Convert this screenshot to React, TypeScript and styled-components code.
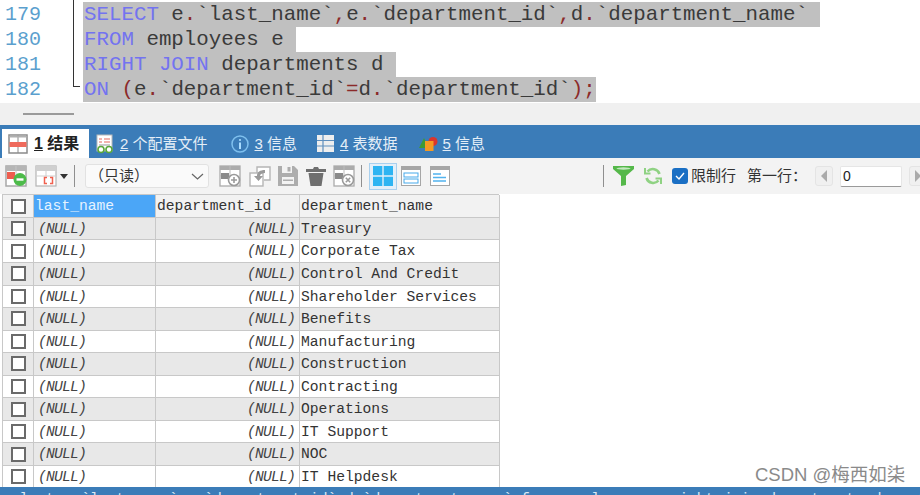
import styled, { createGlobalStyle } from "styled-components";

const GlobalStyle = createGlobalStyle`
  html, body {
    margin: 0;
    padding: 0;
    background: #fff;
  }
  * {
    box-sizing: border-box;
  }
`;

const MONO = `"Liberation Mono", "DejaVu Sans Mono", monospace`;
const CJK = `"Liberation Sans", "Noto Sans CJK SC", sans-serif`;

const departments = [
  "Treasury",
  "Corporate Tax",
  "Control And Credit",
  "Shareholder Services",
  "Benefits",
  "Manufacturing",
  "Construction",
  "Contracting",
  "Operations",
  "IT Support",
  "NOC",
  "IT Helpdesk",
];

// small toolbar / tab drawings
const ResultIcon = () => (
  <svg width="20" height="20" viewBox="0 0 20 20">
    <rect x="1" y="1" width="18" height="18" fill="#fff" stroke="#8a8a8a" strokeWidth="1.5" />
    <rect x="1.5" y="8" width="17" height="5" fill="#ef6a5c" />
    <path d="M10 1v7M10 13v6" stroke="#8a8a8a" />
    <rect x="1.5" y="1.5" width="17" height="2" fill="#b0b0b0" />
  </svg>
);

const ProfileIcon = () => (
  <svg width="18" height="20" viewBox="0 0 18 20">
    <rect x="1" y="1" width="15" height="16" fill="#fff" stroke="#b9b9b9" />
    <path d="M3 5h3M8 5h6M3 8h3M8 8h6" stroke="#e56a5f" strokeWidth="1.2" />
    <path d="M3 11h11" stroke="#aaa" strokeWidth="1.2" />
    <circle cx="5" cy="15.5" r="3" fill="#fff" stroke="#5aa83a" strokeWidth="1.6" />
    <circle cx="13" cy="15.5" r="3" fill="#fff" stroke="#5aa83a" strokeWidth="1.6" />
  </svg>
);

const InfoIcon = () => (
  <svg width="18" height="18" viewBox="0 0 18 18">
    <circle cx="9" cy="9" r="8" fill="#3b7cb8" stroke="#7fc0ee" strokeWidth="1.5" />
    <circle cx="9" cy="5" r="1.1" fill="#a9dcff" />
    <rect x="8" y="7.5" width="2" height="6.5" fill="#a9dcff" />
  </svg>
);

const TableDataIcon = () => (
  <svg width="17" height="17" viewBox="0 0 17 17">
    <rect width="17" height="17" fill="#eeeeee" />
    <path d="M6 0v17M0 5.5h17M0 11h17" stroke="#5f8fbd" strokeWidth="1.2" />
  </svg>
);

const ShapesIcon = () => (
  <svg width="19" height="18" viewBox="0 0 19 18">
    <circle cx="14" cy="6.5" r="4.5" fill="#d9362d" />
    <path d="M0 13L5 3l5 10z" fill="#3f9a35" />
    <rect x="6" y="6" width="8.5" height="10" fill="#f59a23" />
  </svg>
);

const AddGridIcon = () => (
  <svg width="22" height="22" viewBox="0 0 22 22">
    <rect x="1" y="1" width="20" height="20" fill="#fff" stroke="#a8a8a8" strokeWidth="1.5" />
    <rect x="1" y="1" width="20" height="5" fill="#b5b5b5" />
    <path d="M11 1v20M1 11h20" stroke="#c4c4c4" />
    <rect x="2" y="7" width="8" height="7" fill="#ee5d4e" />
    <circle cx="15" cy="14.5" r="6.5" fill="#4dbb4a" />
    <path d="M11.5 14.5h7" stroke="#fff" strokeWidth="2.4" />
  </svg>
);

const RedGridIcon = () => (
  <svg width="22" height="22" viewBox="0 0 22 22">
    <rect x="1" y="1" width="20" height="20" fill="#fff" stroke="#b5b5b5" strokeWidth="1.2" />
    <rect x="1" y="1" width="20" height="5" fill="#cfcfcf" />
    <path d="M11 1v10M1 11h20" stroke="#cfcfcf" />
    <path d="M12 12.5H9.5v6H12M15 12.5h2.5v6H15" fill="none" stroke="#f0614f" strokeWidth="1.5" />
  </svg>
);

const GrayGridIcon = ({ cross }: { cross?: boolean }) => (
  <svg width="22" height="22" viewBox="0 0 22 22">
    <rect x="1" y="1" width="20" height="20" fill="#fff" stroke="#ababab" strokeWidth="1.3" />
    <rect x="1" y="1" width="20" height="4" fill="#ababab" />
    <path d="M11 1v12M1 11h12" stroke="#bbb" />
    <rect x="2" y="8" width="8" height="6" fill="#8a8a8a" />
    <circle cx="15" cy="15" r="5.5" fill="#fff" stroke="#9a9a9a" strokeWidth="1.6" />
    {cross ? (
      <path d="M12.8 12.8l4.4 4.4M17.2 12.8l-4.4 4.4" stroke="#9a9a9a" strokeWidth="1.6" />
    ) : (
      <path d="M12 15h6M15 12v6" stroke="#9a9a9a" strokeWidth="1.6" />
    )}
  </svg>
);

const ImportIcon = () => (
  <svg width="22" height="22" viewBox="0 0 22 22">
    <path d="M8 8V2h13v13h-6" fill="#fff" stroke="#b5b5b5" strokeWidth="1.4" />
    <rect x="1" y="8" width="13" height="13" fill="#fff" stroke="#b5b5b5" strokeWidth="1.4" />
    <path d="M16 5c-5 0-8 2-8 6H5l4.5 5L14 11h-3c0-2 2-3 5-3z" fill="#9a9a9a" />
  </svg>
);

const SaveIcon = () => (
  <svg width="20" height="20" viewBox="0 0 20 20">
    <path d="M0 0h16l4 4v16H0z" fill="#adadad" />
    <rect x="4" y="0" width="10" height="7" fill="#f3f3f3" />
    <rect x="9.5" y="1" width="3" height="4.5" fill="#adadad" />
    <rect x="4" y="11" width="12" height="7" fill="#f3f3f3" />
    <rect x="5" y="13.5" width="10" height="1.5" fill="#adadad" />
  </svg>
);

const TrashIcon = () => (
  <svg width="20" height="20" viewBox="0 0 20 20">
    <path d="M0 3h7l1-2h4l1 2h7v3H0zM2.5 7h15L15.5 20h-11z" fill="#6f6f6f" />
  </svg>
);

const LayoutGridIcon = () => (
  <svg width="20" height="20" viewBox="0 0 20 20">
    <path d="M0 0h9.3v9.3H0zM10.7 0H20v9.3h-9.3zM0 10.7h9.3V20H0zM10.7 10.7H20V20h-9.3z" fill="#2eb4f2" />
  </svg>
);

const LayoutFormIcon = () => (
  <svg width="20" height="20" viewBox="0 0 20 20">
    <rect x="0.5" y="0.5" width="19" height="19" fill="#fff" stroke="#a6a6a6" />
    <rect width="20" height="4" fill="#a6a6a6" />
    <rect x="3" y="7" width="14" height="4" fill="#fff" stroke="#47a9ea" />
    <rect x="3" y="13" width="14" height="4" fill="#fff" stroke="#47a9ea" />
  </svg>
);

const LayoutTextIcon = () => (
  <svg width="20" height="20" viewBox="0 0 20 20">
    <rect x="0.5" y="0.5" width="19" height="19" fill="#fff" stroke="#a6a6a6" />
    <rect width="20" height="4" fill="#a6a6a6" />
    <path d="M3 8h8M3 11.5h13M3 15h13" stroke="#52b3ee" strokeWidth="1.4" />
  </svg>
);

const FunnelIcon = () => (
  <svg width="21" height="20" viewBox="0 0 21 20">
    <path d="M0 0h21v3L13 10v9l-5 1V10L0 3z" fill="#55b84a" />
    <ellipse cx="10.5" cy="2.5" rx="7" ry="1.2" fill="#c3e8be" />
  </svg>
);

const RefreshIcon = () => (
  <svg width="18" height="18" viewBox="0 0 18 18" fill="none" stroke="#8fd283" strokeWidth="2.6">
    <path d="M15.5 7A7 7 0 0 0 3.5 4.5" />
    <path d="M2.5 11a7 7 0 0 0 12 2.5" />
    <path d="M1 1v5.5h5.5M17 17v-5.5h-5.5" strokeWidth="2" />
  </svg>
);

const Tick = () => (
  <svg width="10" height="8" viewBox="0 0 10 8" fill="none" stroke="#fff" strokeWidth="1.4">
    <path d="M1 4l3 3 5-6" />
  </svg>
);

const Chevron = () => (
  <svg width="13" height="7" viewBox="0 0 13 7" fill="none" stroke="#666" strokeWidth="1.2">
    <path d="M1 1l5.5 5L12 1" />
  </svg>
);

const Key = ({ children }: { children: string }) => <KeyWord>{children}</KeyWord>;
const P = ({ children }: { children: string }) => <Punct>{children}</Punct>;

const App = () => {
  return (
    <Page>
      <GlobalStyle />
      <Editor>
        <FoldLine />
        <CodeRow>
          <LineNo>179</LineNo>
          <Selection>
            <Key>SELECT</Key> e<P>.</P>`last_name`<P>,</P>e<P>.</P>`department_id`<P>,</P>d<P>.</P>`department_name`{" "}
          </Selection>
        </CodeRow>
        <CodeRow>
          <LineNo>180</LineNo>
          <Selection>
            <Key>FROM</Key> employees e{" "}
          </Selection>
        </CodeRow>
        <CodeRow>
          <LineNo>181</LineNo>
          <Selection>
            <Key>RIGHT JOIN</Key> departments d{" "}
          </Selection>
        </CodeRow>
        <CodeRow>
          <LineNo>182</LineNo>
          <Selection>
            <Key>ON</Key> <P>(</P>e<P>.</P>`department_id`<P>=</P>d<P>.</P>`department_id`<P>);</P>
          </Selection>
        </CodeRow>
      </Editor>

      <ScrollStrip>
        <ScrollThumb />
      </ScrollStrip>

      <TabBar>
        <ActiveTab>
          <ResultIcon />
          <TabLabel $active>
            <u>1</u> 结果
          </TabLabel>
        </ActiveTab>
        <Tab $gap={6} $left={7}>
          <ProfileIcon />
          <TabLabel>
            <u>2</u> 个配置文件
          </TabLabel>
        </Tab>
        <Tab $gap={6} $left={23}>
          <InfoIcon />
          <TabLabel>
            <u>3</u> 信息
          </TabLabel>
        </Tab>
        <Tab $gap={6} $left={20}>
          <TableDataIcon />
          <TabLabel>
            <u>4</u> 表数据
          </TabLabel>
        </Tab>
        <Tab $gap={5} $left={21}>
          <ShapesIcon />
          <TabLabel>
            <u>5</u> 信息
          </TabLabel>
        </Tab>
      </TabBar>

      <Toolbar>
        <ToolGroup $gap={8}>
          <AddGridIcon />
          <RedGridIcon />
        </ToolGroup>
        <DropArrow />
        <ToolSep $left={6} />
        <ReadOnlySelect>
          <span>（只读）</span>
          <Chevron />
        </ReadOnlySelect>
        <ToolGroup $gap={7.5} $left={10}>
          <GrayGridIcon />
          <ImportIcon />
          <SaveIcon />
          <TrashIcon />
          <GrayGridIcon cross />
        </ToolGroup>
        <ToolSep $left={6} />
        <ViewButton>
          <LayoutGridIcon />
        </ViewButton>
        <ToolGroup $gap={9} $left={4}>
          <LayoutFormIcon />
          <LayoutTextIcon />
        </ToolGroup>
        <ToolSep $left={153} />
        <ToolGroup $gap={10} $left={9}>
          <FunnelIcon />
          <RefreshIcon />
        </ToolGroup>
        <LimitCheck>
          <Tick />
        </LimitCheck>
        <ToolText $left={3}>限制行</ToolText>
        <ToolText $left={11}>第一行：</ToolText>
        <PagerButton $left={8}>
          <PagerArrow />
        </PagerButton>
        <RowInput>0</RowInput>
        <PagerButton $left={7}>
          <PagerArrow $right />
        </PagerButton>
      </Toolbar>

      <Results>
        <Table>
          <CheckCell>
            <Check />
          </CheckCell>
          <HeadCell $selected>last_name</HeadCell>
          <HeadCell>department_id</HeadCell>
          <HeadCell>department_name</HeadCell>
          {departments.map((name, i) => (
            <TableRow key={name} $odd={i % 2 === 0}>
              <CheckCell>
                <Check />
              </CheckCell>
              <NullCell>(NULL)</NullCell>
              <NullCell $right>(NULL)</NullCell>
              <Cell>{name}</Cell>
            </TableRow>
          ))}
        </Table>
        <Watermark>CSDN @梅西如柒</Watermark>
      </Results>

      <StatusBar>
        select e.`last_name`,e.`department_id`,d.`department_name` from employees e right join departments d on (e.`department_id`=d.`department_id`)
      </StatusBar>
    </Page>
  );
};

// #region styled-components

const Page = styled.div`
  position: relative;
  width: 920px;
  height: 495px;
  display: flex;
  flex-direction: column;
  overflow: hidden;
  background: #fff;
`;

const Editor = styled.div`
  position: relative;
  height: 103px;
  padding-top: 2px;
  background: #fff;
  flex: none;
`;

const FoldLine = styled.div`
  position: absolute;
  left: 73px;
  top: 0;
  width: 7px;
  height: 87px;
  border-left: 1px solid #333;
  border-bottom: 1px solid #333;
`;

const CodeRow = styled.div`
  display: flex;
  height: 25px;
  font: 20.8px/26px ${MONO};
  white-space: pre;
`;

const LineNo = styled.div`
  width: 83px;
  padding-left: 5px;
  color: #5b9fce;
  font-size: 20px;
`;

const Selection = styled.div`
  height: 25px;
  padding-left: 1px;
  background: #c0c0c0;
  color: #3a3a3a;
`;

const KeyWord = styled.span`
  color: #7373f0;
`;

const Punct = styled.span`
  color: #8b2a2a;
`;

const ScrollStrip = styled.div`
  flex: none;
  height: 22px;
  display: flex;
  align-items: center;
  padding-left: 23px;
  background: #f0f0f0;
`;

const ScrollThumb = styled.div`
  width: 51px;
  height: 2px;
  background: #9a9a9a;
`;

const TabBar = styled.div`
  flex: none;
  height: 33px;
  display: flex;
  align-items: flex-end;
  padding-left: 2px;
  background: #3b7cb8;
`;

const ActiveTab = styled.div`
  flex: none;
  width: 87px;
  height: 29px;
  display: flex;
  align-items: center;
  gap: 6px;
  padding-left: 6px;
  background: #fff;
`;

const Tab = styled.div<{ $gap: number; $left: number }>`
  height: 29px;
  display: flex;
  align-items: center;
  gap: ${(p) => p.$gap}px;
  margin-left: ${(p) => p.$left}px;
`;

const TabLabel = styled.span<{ $active?: boolean }>`
  font: ${(p) => (p.$active ? 700 : 400)} ${(p) => (p.$active ? 16 : 15)}px/20px ${CJK};
  color: ${(p) => (p.$active ? "#222" : "#e4eef7")};
  white-space: pre;
`;

const Toolbar = styled.div`
  flex: none;
  height: 36px;
  display: flex;
  align-items: center;
  padding-left: 5px;
  background: #f3f3f3;
`;

const ToolGroup = styled.div<{ $gap: number; $left?: number }>`
  flex: none;
  display: flex;
  align-items: center;
  gap: ${(p) => p.$gap}px;
  margin-left: ${(p) => p.$left ?? 0}px;
`;

const DropArrow = styled.div`
  flex: none;
  width: 0;
  height: 0;
  margin-left: 3px;
  border-left: 4.5px solid transparent;
  border-right: 4.5px solid transparent;
  border-top: 5px solid #333;
`;

const ToolSep = styled.div<{ $left: number }>`
  flex: none;
  width: 1px;
  height: 22px;
  margin-left: ${(p) => p.$left}px;
  background: #8f8f8f;
`;

const ReadOnlySelect = styled.div`
  flex: none;
  width: 124px;
  height: 24px;
  margin-left: 10px;
  display: flex;
  align-items: center;
  justify-content: space-between;
  padding: 0 4px 0 3px;
  background: #fafafa;
  border: 1px solid #e2e2e2;
  border-radius: 3px;
  font: 15px/20px ${CJK};
  color: #333;
`;

const ViewButton = styled.div`
  flex: none;
  width: 28px;
  height: 27px;
  margin-left: 7px;
  display: flex;
  align-items: center;
  justify-content: center;
  background: #e3eff9;
  border: 1px solid #a9d0ee;
`;

const LimitCheck = styled.div`
  flex: none;
  width: 16px;
  height: 16px;
  margin-left: 10px;
  display: flex;
  align-items: center;
  justify-content: center;
  background: #1a6fc4;
  border-radius: 3px;
`;

const ToolText = styled.span<{ $left: number }>`
  flex: none;
  margin-left: ${(p) => p.$left}px;
  font: 15px/20px ${CJK};
  color: #333;
  white-space: nowrap;
`;

const PagerButton = styled.div<{ $left: number }>`
  flex: none;
  width: 18px;
  height: 20px;
  margin-left: ${(p) => p.$left}px;
  display: flex;
  align-items: center;
  justify-content: center;
  background: #f0f0f0;
  border: 1px solid #e4e4e4;
  border-radius: 3px;
`;

const PagerArrow = styled.div<{ $right?: boolean }>`
  width: 0;
  height: 0;
  border-top: 6px solid transparent;
  border-bottom: 6px solid transparent;
  ${(p) =>
    p.$right
      ? "border-left: 6px solid #aaa;"
      : "border-right: 6px solid #aaa;"}
`;

const RowInput = styled.div`
  flex: none;
  width: 62px;
  height: 21px;
  margin-left: 7px;
  padding-left: 2px;
  background: #fff;
  border: 1px solid #e6e6e6;
  border-bottom-color: #9a9a9a;
  border-radius: 2px;
  font: 14px/19px ${CJK};
  color: #222;
`;

const Results = styled.div`
  position: relative;
  flex: 1;
  min-height: 0;
  padding: 0.4px 0 0 2px;
  background: #fff;
  overflow: hidden;
`;

const Table = styled.div`
  width: 497px;
  display: grid;
  grid-template-columns: 31px 122px 144px 200px;
  grid-auto-rows: 22.55px;
  border-left: 1px solid #c8c8c8;
  border-top: 1px solid #c8c8c8;
  font: 14.67px/22px ${MONO};
  color: #333;
`;

const TableRow = styled.div<{ $odd: boolean }>`
  display: contents;
  & > div {
    background: ${(p) => (p.$odd ? "#e8e8e8" : "#fff")};
  }
`;

const Cell = styled.div`
  padding-left: 1px;
  border-right: 1px solid #c8c8c8;
  border-bottom: 1px solid #c8c8c8;
  white-space: nowrap;
  overflow: hidden;
`;

const HeadCell = styled(Cell)<{ $selected?: boolean }>`
  background: ${(p) => (p.$selected ? "#4ba6f7" : "#f2f2f2")};
  color: ${(p) => (p.$selected ? "#e6f3ff" : "#333")};
`;

const NullCell = styled(Cell)<{ $right?: boolean }>`
  letter-spacing: -0.8px;
  font-style: italic;
  color: #444;
  padding-left: ${(p) => (p.$right ? 0 : 4)}px;
  padding-right: ${(p) => (p.$right ? 4 : 0)}px;
  text-align: ${(p) => (p.$right ? "right" : "left")};
`;

const CheckCell = styled(Cell)`
  display: flex;
  align-items: center;
  justify-content: center;
  padding: 0;
  background: #f2f2f2;
`;

const Check = styled.div`
  width: 15px;
  height: 15px;
  background: #fff;
  border: 2px solid #6a6a6a;
`;

const Watermark = styled.div`
  position: absolute;
  left: 755px;
  top: 270px;
  font: 18.5px/22px ${CJK};
  color: #8a8a8a;
  white-space: nowrap;
`;

const StatusBar = styled.div`
  flex: none;
  height: 8px;
  padding: 5px 0 0 2px;
  background: #3b7cb8;
  color: #dfe9f3;
  font: 14.67px/14px ${MONO};
  white-space: nowrap;
  overflow: hidden;
`;

// #endregion

export default App;
